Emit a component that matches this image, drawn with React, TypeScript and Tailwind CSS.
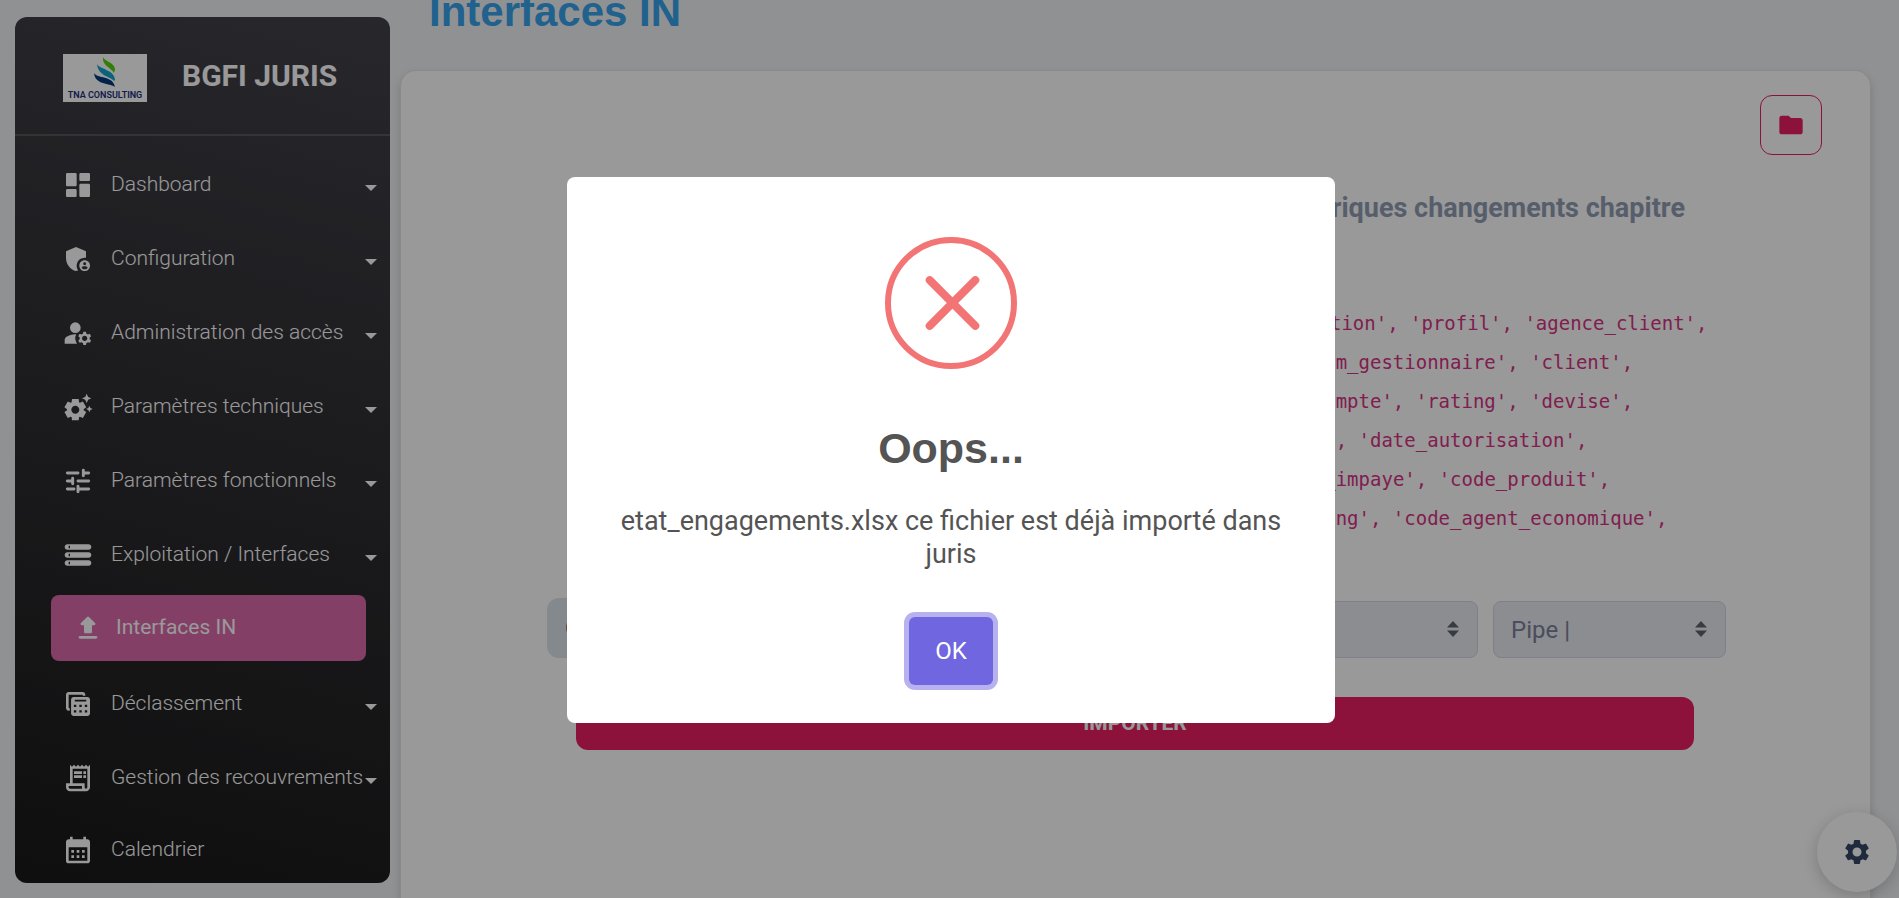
import { useState } from "react";
import type { ReactNode } from "react";
import {
  MdAdminPanelSettings,
  MdManageAccounts,
  MdSettingsSuggest,
  MdFolder,
  MdSettings,
  MdOutlineReceiptLong,
  MdCalendarMonth,
} from "react-icons/md";

const Svg = ({ children }: { children: ReactNode }) => (
  <svg viewBox="0 0 24 24" fill="currentColor" className="size-8 shrink-0" aria-hidden="true">
    {children}
  </svg>
);

const DashboardIcon = () => (
  <Svg>
    <path d="M4 13h6c.55 0 1-.45 1-1V4c0-.55-.45-1-1-1H4c-.55 0-1 .45-1 1v8c0 .55.45 1 1 1zm0 8h6c.55 0 1-.45 1-1v-4c0-.55-.45-1-1-1H4c-.55 0-1 .45-1 1v4c0 .55.45 1 1 1zm10 0h6c.55 0 1-.45 1-1v-8c0-.55-.45-1-1-1h-6c-.55 0-1 .45-1 1v8c0 .55.45 1 1 1zM13 4v4c0 .55.45 1 1 1h6c.55 0 1-.45 1-1V4c0-.55-.45-1-1-1h-6c-.55 0-1 .45-1 1z" />
  </Svg>
);

const TuneIcon = () => (
  <Svg>
    <path
      d="M4 6h8M16 4v4M16 6h4M4 12h4M8 10v4M12 12h8M4 18h5M12 16v4M13 18h7"
      fill="none"
      stroke="currentColor"
      strokeWidth="2.2"
      strokeLinecap="round"
    />
  </Svg>
);

const StorageIcon = () => (
  <Svg>
    <path
      fillRule="evenodd"
      d="M4 20h16c1.100 0 2-.9 2-2s-.9-2-2-2H4c-1.100 0-2 .9-2 2s.9 2 2 2zm1-3h1v2H5v-2zM2 6c0 1.100.9 2 2 2h16c1.100 0 2-.9 2-2s-.9-2-2-2H4c-1.100 0-2 .9-2 2zm4 1H5V5h1v2zm-2 7h16c1.100 0 2-.9 2-2s-.9-2-2-2H4c-1.100 0-2 .9-2 2s.9 2 2 2zm1-3h1v2H5v-2z"
    />
  </Svg>
);

const UploadIcon = () => (
  <Svg>
    <path d="M10 16h4c.55 0 1-.45 1-1v-5h1.590c.89 0 1.340-1.080.71-1.710L12.710 3.700a.996.996 0 0 0-1.410 0L6.710 8.290c-.63.63-.19 1.710.7 1.710H9v5c0 .55.45 1 1 1zm-4 2h12c.55 0 1 .45 1 1s-.45 1-1 1H6c-.55 0-1-.45-1-1s.45-1 1-1z" />
  </Svg>
);

// Calculator in front of a second sheet
const TableStackIcon = () => (
  <Svg>
    <path
      fillRule="evenodd"
      d="M5 3h10.500c1.100 0 2 .9 2 2v.8h-2V5H5v10h.8v2H5c-1.100 0-2-.9-2-2V5c0-1.100.9-2 2-2zm3.800 3.800h10.200c1.100 0 2 .9 2 2V19c0 1.100-.9 2-2 2H8.800c-1.100 0-2-.9-2-2V8.800c0-1.100.9-2 2-2zm.8 2v1.400h8.600V8.800H9.600zM8.900 12.500v1.800h1.800v-1.800H8.900zm4.100 0v1.800h1.800v-1.800H13zm4.100 0v1.800h1.800v-1.800h-1.800zM8.900 16.600v1.800h1.800v-1.800H8.900zm4.100 0v1.800h1.800v-1.800H13zm4.100 0v1.800h1.800v-1.800h-1.800z"
    />
  </Svg>
);

const menu = [
  { label: "Dashboard", icon: <DashboardIcon /> },
  { label: "Configuration", icon: <MdAdminPanelSettings className="size-8 shrink-0" /> },
  { label: "Administration des accès", icon: <MdManageAccounts className="size-8 shrink-0" /> },
  { label: "Paramètres techniques", icon: <MdSettingsSuggest className="size-8 shrink-0" /> },
  { label: "Paramètres fonctionnels", icon: <TuneIcon /> },
  { label: "Exploitation / Interfaces", icon: <StorageIcon />, child: "Interfaces IN" },
  { label: "Déclassement", icon: <TableStackIcon /> },
  { label: "Gestion des recouvrements", icon: <MdOutlineReceiptLong className="size-8 shrink-0" /> },
];

const columns = [
  "'date_de_situation', 'code_agence', 'nom_de_agence', 'code_exploitation', 'profil', 'agence_client',",
  "'code_gestionnaire', 'nom_de_l_agence', 'agence_gestion', 'nom_gestionnaire', 'client',",
  "'nom_client', 'code_cli', 'chapitre', 'libelle_chapitre', 'compte', 'rating', 'devise',",
  "'solde_comptable', 'solde_engagement', 'montant_autorise', 'date_autorisation',",
  "'date_echeance', 'montant_retard', 'montant_impaye', 'date_impaye', 'code_produit',",
  "'libelle_produit', 'code_categorie', 'classe_risque', 'date_rating', 'code_agent_economique',",
];

const Logo = () => (
  <svg viewBox="0 0 84 48" className="mt-1 h-12 w-21 shrink-0" role="img" aria-label="TNA Consulting">
    <rect width="84" height="48" fill="#fff" />
    <path d="M40 3c1 4 12 6 12 12 0 2-1 3-1 4-2-5-12-7-11-16z" fill="#55d20c" />
    <path d="M34 10c2 5 18 6 18 16l-1 1c-4-5-16-5-17-17z" fill="#0ea5cf" />
    <path d="M31 19c3 6 19 2 21 14-5-4-20-2-21-14z" fill="#003a7d" />
    <text
      x="42"
      y="44"
      textAnchor="middle"
      fontSize="9"
      fontWeight="600"
      fill="#1b2f7c"
      fontFamily="Roboto, sans-serif"
    >
      TNA CONSULTING
    </text>
  </svg>
);

const Sidebar = () => (
  <aside className="mt-[17px] mb-[15px] ml-[15px] flex w-[375px] shrink-0 flex-col overflow-hidden rounded-xl bg-linear-[195deg] from-[#42424a] to-[#191919] text-white">
    <div className="flex h-[117px] shrink-0 items-center gap-[35px] pl-12">
      <Logo />
      <span className="text-3xl font-bold">BGFI JURIS</span>
    </div>
    <hr className="border-t-2 border-white/15" />
    <nav className="mt-3 text-[21px] font-light">
      <ul>
        {menu.map((item) => (
          <li key={item.label}>
            <a href="#" className="flex h-[74px] items-center pr-[13px] pl-[47px] whitespace-nowrap">
              {item.icon}
              <span className="ml-[17px]">{item.label}</span>
              <span className="mt-1.5 ml-auto border-x-6 border-t-6 border-x-transparent border-t-white" />
            </a>
            {item.child && (
              <a
                href="#"
                className="mt-[3px] mr-6 mb-1.5 ml-9 flex h-[66px] items-center rounded-lg bg-[#dc69ac] pl-[21px] font-normal"
              >
                <UploadIcon />
                <span className="ml-3">{item.child}</span>
              </a>
            )}
          </li>
        ))}
        <li>
          <a href="#" className="flex h-[70px] items-center pl-[47px]">
            <MdCalendarMonth className="size-8 shrink-0" />
            <span className="ml-[17px]">Calendrier</span>
          </a>
        </li>
      </ul>
    </nav>
  </aside>
);

const Select = ({ label, value }: { label: string; value: string }) => (
  <div className="relative w-[233px]">
    <select
      aria-label={label}
      className="h-[57px] w-full appearance-none rounded-lg border border-[#d2d6e6] bg-[#e9ebf1] px-[17px] text-2xl text-[#7b809a]"
    >
      <option>{value}</option>
    </select>
    <svg
      viewBox="0 0 12 16"
      className="pointer-events-none absolute top-5 right-[19px] h-4 w-3"
      fill="#5d646e"
      aria-hidden="true"
    >
      <path d="M6 0 0 6.500h12zM6 16l6-6.500H0z" />
    </svg>
  </div>
);

const ImportCard = () => (
  <section className="flex-1 rounded-t-2xl border border-b-0 border-black/10 bg-white pt-6 shadow-[0_4px_8px_rgba(0,0,0,0.15)]">
    <div className="flex justify-end pr-12">
      <button
        aria-label="Dossier"
        className="flex h-15 w-[62px] items-center justify-center rounded-xl border border-[#e91e63] text-[#e91e63]"
      >
        <MdFolder className="size-7" />
      </button>
    </div>
    <h4 className="mt-[33px] pr-[185px] text-right text-[27px] leading-10 font-bold text-[#929db2]">
      Etat des engagements et historiques changements chapitre
    </h4>
    <div className="mt-19 text-center font-['DejaVu_Sans_Mono',monospace] text-[19px] leading-[39px] text-[#d63384]">
      {columns.map((line) => (
        <code key={line} className="block font-[inherit]">
          {line}
        </code>
      ))}
    </div>
    <form className="mt-15 pr-36 pl-[146px]" onSubmit={(e) => e.preventDefault()}>
      <div className="flex items-end gap-[15px]">
        <label className="flex h-15 flex-1 items-center rounded-xl bg-[#dae4ea] px-[18px] text-2xl text-[#344767]">
          Choisir un fichier
          <input type="file" className="sr-only" />
        </label>
        <Select label="Type de fichier" value="Excel" />
        <Select label="Séparateur" value="Pipe |" />
      </div>
      <div className="mt-[39px] pr-8 pl-[29px]">
        <button
          type="submit"
          className="h-[53px] w-full rounded-xl bg-[#e91e63] text-[21px] font-bold text-white uppercase"
        >
          Importer
        </button>
      </div>
    </form>
  </section>
);

const ErrorDialog = ({ onClose }: { onClose: () => void }) => (
  <div className="fixed inset-0 flex items-center justify-center bg-black/40 pt-[2px] pl-[3px]">
    <div
      role="alertdialog"
      aria-labelledby="dialog-title"
      className="flex w-3xl flex-col items-center rounded-lg bg-white px-10 pt-15 pb-[38px] text-[#545454]"
    >
      <svg viewBox="0 0 132 132" className="size-33" fill="none" stroke="#f27474" aria-hidden="true">
        <circle cx="66" cy="66" r="63" strokeWidth="6" />
        <path d="M44.700 43.200l45.600 45.600M90.300 43.200L44.700 88.800" strokeWidth="8" strokeLinecap="round" />
      </svg>
      <h2
        id="dialog-title"
        className="mt-13 font-['Liberation_Sans',sans-serif] text-[43px] leading-[54px] font-bold"
      >
        Oops...
      </h2>
      <p className="mt-[30px] text-center text-[27px] leading-[33px]">
        etat_engagements.xlsx ce fichier est déjà importé dans juris
      </p>
      <button
        onClick={onClose}
        className="mt-[46px] h-17 w-21 rounded-md bg-[#7066e0] text-2xl text-white ring-5 ring-[#7066e0]/50"
      >
        OK
      </button>
    </div>
  </div>
);

function App() {
  const [open, setOpen] = useState(true);

  return (
    <div className="flex h-screen overflow-hidden bg-[#f0f2f5] font-[Roboto,sans-serif]">
      <Sidebar />
      <main className="flex flex-1 flex-col pr-7 pl-[10px]">
        <h1 className="mb-[46px] pl-[29px] font-['Liberation_Sans',sans-serif] text-[42px] leading-6 font-bold text-[#36a2eb]">
          Interfaces IN
        </h1>
        <ImportCard />
      </main>
      <button
        aria-label="Paramètres"
        className="fixed right-[2px] bottom-[6px] flex size-20 items-center justify-center rounded-full bg-white text-[#344767] shadow-[0_4px_16px_rgba(0,0,0,0.2)]"
      >
        <MdSettings className="size-[30px]" />
      </button>
      {open && <ErrorDialog onClose={() => setOpen(false)} />}
    </div>
  );
}

export default App;
